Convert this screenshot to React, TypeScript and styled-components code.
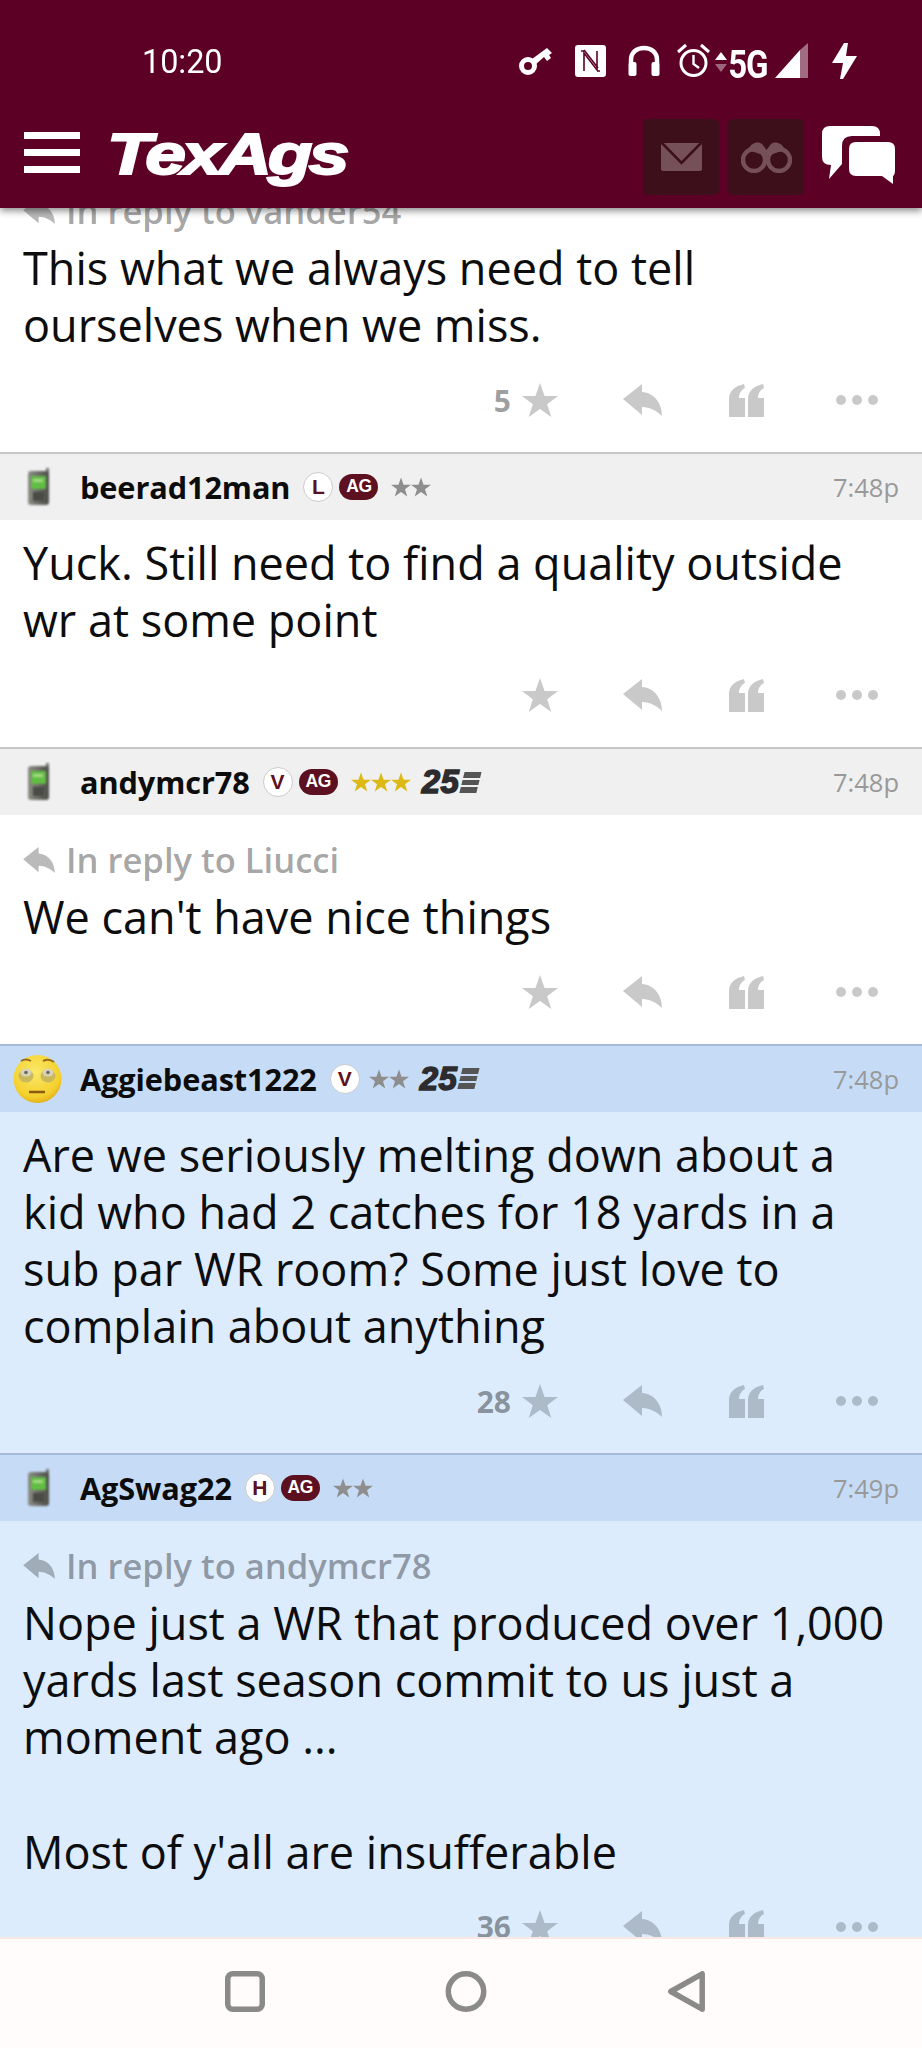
import React from "react";
import styled, { createGlobalStyle } from "styled-components";

const Global = createGlobalStyle`
  html, body { margin: 0; padding: 0; background: #fff; }
  body { width: 922px; height: 2048px; overflow: hidden; font-family: "Open Sans", "Liberation Sans", sans-serif; }
`;

const Page = styled.div`
  width: 922px; height: 2048px; display: flex; flex-direction: column; overflow: hidden;
`;
const Header = styled.header`
  position: relative; z-index: 2; flex: 0 0 208px; background: #5d0025;
  box-shadow: 0 3px 7px rgba(0,0,0,.45); display: flex; flex-direction: column;
`;
const StatusBar = styled.div`
  flex: 0 0 119px; box-sizing: border-box; padding: 2px 65px 0 142px; display: flex; align-items: center; color: #fff;
`;
const Clock = styled.span`
  font: 400 33px Roboto, sans-serif; margin-right: auto; position: relative; top: 1px; display: inline-block; transform: scaleX(.98); transform-origin: left center;
`;
const StatusIcon = styled.svg<{ $ml: number }>`
  margin-left: ${p => p.$ml}px; flex: none; fill: #fff; overflow: visible;
`;
const FiveG = styled.span`
  font: 700 33px Roboto, sans-serif; margin-left: 1px; position: relative; top: 4px; letter-spacing: -1.4px; display: inline-block; transform: scaleY(1.16);
`;
const Toolbar = styled.div`
  flex: 1; display: flex; align-items: flex-start; padding: 0 27px 0 24px;
`;
const Burger = styled.div`
  width: 56px; height: 41px; margin-top: 13px; display: flex; flex-direction: column; justify-content: space-between;
  & > i { display: block; height: 7px; background: #fff; }
`;
const Logo = styled.span`
  margin-left: 27px; margin-top: 2px; color: #fff; font: italic 700 58px/66px "Liberation Sans", sans-serif;
  letter-spacing: -3px; -webkit-text-stroke: 2px #fff; display: inline-block; transform: scaleX(1.26); transform-origin: left center;
`;
const ToolGroup = styled.div`
  margin-left: auto; display: flex; align-items: flex-start;
`;
const DimButton = styled.div`
  width: 76px; height: 76px; margin-right: 9px; border-radius: 5px; background: #3c0f1b;
  display: flex; align-items: center; justify-content: center;
`;
const ChatIcon = styled.svg`
  margin: 7px 0 0 9px; display: block;
`;
const Main = styled.main`
  flex: 1; min-height: 0; overflow: hidden; background: #fff;
`;
const Feed = styled.div`
  margin-top: -42px;
`;
const PostBox = styled.article<{ $blue?: boolean }>`
  background: ${p => (p.$blue ? "#dcecfd" : "#fff")};
  --rule: ${p => (p.$blue ? "#a5bad6" : "#c6c6c6")};
  --head: ${p => (p.$blue ? "#c6dcf6" : "#f0f0f0")};
`;
const PostHead = styled.div`
  height: 66px; border-top: 2px solid var(--rule); background: var(--head);
  display: flex; align-items: center; padding-right: 23px;
`;
const Avatar = styled.div`
  flex: 0 0 80px; display: flex; align-items: center; padding-left: 13px; box-sizing: border-box; height: 100%;
`;
const Name = styled.span`
  font: 700 30.7px "Open Sans", sans-serif; color: #0c0c0c; letter-spacing: -.1px;
`;
const RankBadge = styled.span`
  width: 30px; height: 30px; margin-left: 13px; border-radius: 50%; background: #fff; border: 1px solid #ccc; box-sizing: border-box;
  display: flex; align-items: center; justify-content: center; color: #5d1020; font: 700 21px "Liberation Sans", sans-serif;
`;
const AgBadge = styled.span`
  margin-left: 6px; width: 39px; height: 26px; border-radius: 13px; background: #5d1020; color: #fff;
  display: flex; align-items: center; justify-content: center; font: 700 17.5px "Liberation Sans", sans-serif; letter-spacing: -.4px;
`;
const StarRow = styled.span<{ $after: number }>`
  display: flex; margin-left: ${p => p.$after}px;
`;
const Tier = styled.span`
  margin-left: 11px; display: flex; align-items: center; color: #2c2c2e;
  font: italic 700 33px/30px "Liberation Sans", sans-serif; -webkit-text-stroke: 1.5px #2c2c2e; letter-spacing: .4px;
`;
const TierBars = styled.span`
  display: flex; flex-direction: column; gap: 2px; margin-left: 3px; transform: skewX(-14deg);
  & > i { display: block; width: 17px; height: 5.5px; background: #555; }
`;
const Time = styled.span`
  margin-left: auto; font: 400 25.5px "Open Sans", sans-serif; color: #999;
`;
const Body = styled.div`
  padding: 14px 23px 0;
`;
const Reply = styled.div`
  margin: 9px 0 6px; height: 44px; display: flex; align-items: center; gap: 11px;
  font: 600 34.6px/44px "Open Sans", sans-serif; color: rgba(0,0,0,.37);
`;
const Text = styled.p`
  margin: 0; font: 400 45px/57.2px "Open Sans", sans-serif; color: #0d0d0d; white-space: pre-line;
`;
const Actions = styled.div`
  height: 34px; padding: 30px 44px 34.5px 0; display: flex; align-items: center; justify-content: flex-end;
`;
const Count = styled.span`
  font: 700 30px "Open Sans", sans-serif; color: rgba(0,0,0,.4); margin-right: 11px;
`;
const ActionIcon = styled.svg<{ $ml: number }>`
  margin-left: ${p => p.$ml}px; flex: none; fill: rgba(0,0,0,.21);
`;
const NavBar = styled.nav`
  position: relative; z-index: 2; flex: 0 0 111px; box-sizing: border-box; background: #fffcfb; border-top: 2px solid #f8e9e5;
  display: flex; align-items: flex-start; padding: 32px 0 0 225px;
`;
const NavIcon = styled.svg<{ $ml: number }>`
  margin-left: ${p => p.$ml}px; fill: none; stroke: #8a8a88; stroke-width: 5.5; stroke-linejoin: round;
`;

const starPath = "M18 0 L22.6 13 L36 13 L25.2 21.2 L29.3 34 L18 26 L6.7 34 L10.8 21.2 L0 13 L13.4 13 Z";
const replyPath = "M0 15 L19 0 V8 C32 9 39 20 39 32 C34 27 27 23 19 23 V31 Z";

const SmallStar = ({ gold }: { gold?: boolean }) => (
  <svg width="20" height="20" viewBox="0 0 36 34"><path d={starPath} fill={gold ? "#dcb915" : "#8e8e8e"} /></svg>
);

const ReplyGlyph = ({ w, h }: { w: number; h: number }) => (
  <svg width={w} height={h} viewBox="0 0 39 32" style={{ flex: "none" }}>
    <path d={replyPath} fill="rgba(0,0,0,.27)" />
  </svg>
);

const Phone = () => (
  <svg width="24" height="38" viewBox="0 0 24 38" style={{ marginLeft: 14, filter: "blur(.8px)" }}>
    <defs>
      <linearGradient id="ph" x1="0" x2="1"><stop offset="0" stopColor="#8d8d86" /><stop offset="1" stopColor="#4c4c48" /></linearGradient>
    </defs>
    <rect x="19" y="0" width="3" height="8" fill="#777" />
    <rect x="1" y="3" width="21" height="34" rx="3" fill="url(#ph)" />
    <rect x="4" y="8" width="15" height="13" rx="1" fill="#62bd45" />
    <rect x="6" y="11" width="10" height="3" fill="#a5dc84" />
    <rect x="6" y="24" width="11" height="9" fill="#4a4a46" />
  </svg>
);

const Face = () => (
  <svg width="49" height="48" viewBox="0 0 49 48" style={{ filter: "blur(.5px)" }}>
    <defs>
      <radialGradient id="fc" cx=".45" cy=".35" r=".7"><stop offset="0" stopColor="#fbe96a" /><stop offset=".75" stopColor="#f4d02c" /><stop offset="1" stopColor="#dca61a" /></radialGradient>
    </defs>
    <circle cx="24.5" cy="24" r="24" fill="url(#fc)" />
    <ellipse cx="13" cy="21" rx="7.5" ry="6.5" fill="#c9b85c" />
    <ellipse cx="35" cy="21" rx="7.5" ry="6.5" fill="#c9b85c" />
    <ellipse cx="13" cy="17.5" rx="5.5" ry="4" fill="#d8d3b6" />
    <ellipse cx="35" cy="17.5" rx="5.5" ry="4" fill="#d8d3b6" />
    <circle cx="13" cy="17.5" r="1.8" fill="#6a6a60" />
    <circle cx="35" cy="17.5" r="1.8" fill="#6a6a60" />
    <path d="M8 6 Q13 3 18 6 M30 6 Q36 3 41 7" stroke="#9a6a1c" strokeWidth="2" fill="none" />
    <path d="M16 37 H32" stroke="#8a5a14" strokeWidth="2.5" />
  </svg>
);

const ActionBar = ({ count }: { count?: number }) => (
  <Actions>
    {count !== undefined && <Count>{count}</Count>}
    <ActionIcon $ml={0} width="36" height="34" viewBox="0 0 36 34"><path d={starPath} /></ActionIcon>
    <ActionIcon $ml={65} width="39" height="32" viewBox="0 0 39 32"><path d={replyPath} /></ActionIcon>
    <ActionIcon $ml={67} width="35" height="33" viewBox="0 0 35 33"><path d="M0 33 V15 C0 7 6 2 15 0 L16 4 C12 6 10 10 10 14 H16 V33 Z M19 33 V15 C19 7 25 2 34 0 L35 4 C31 6 29 10 29 14 H35 V33 Z" /></ActionIcon>
    <ActionIcon $ml={72} width="42" height="10" viewBox="0 0 42 10"><circle cx="5" cy="5" r="5" /><circle cx="21" cy="5" r="5" /><circle cx="37" cy="5" r="5" /></ActionIcon>
  </Actions>
);

type PostProps = {
  name?: string; rank?: string; ag?: boolean; stars?: number; gold?: boolean; tier?: boolean;
  time?: string; blue?: boolean; reply?: string; text: string; count?: number; face?: boolean;
};

const Post = ({ name, rank, ag, stars = 2, gold, tier, time, blue, reply, text, count, face }: PostProps) => (
  <PostBox $blue={blue}>
    {name && (
      <PostHead>
        <Avatar>{face ? <Face /> : <Phone />}</Avatar>
        <Name>{name}</Name>
        <RankBadge>{rank}</RankBadge>
        {ag && <AgBadge>AG</AgBadge>}
        <StarRow $after={ag ? 13 : 9}>
          {Array.from({ length: stars }, (_, i) => <SmallStar key={i} gold={gold} />)}
        </StarRow>
        {tier && <Tier>25<TierBars><i /><i /><i /></TierBars></Tier>}
        <Time>{time}</Time>
      </PostHead>
    )}
    <Body>
      {reply && <Reply><ReplyGlyph w={32} h={26} />In reply to {reply}</Reply>}
      <Text>{text}</Text>
    </Body>
    <ActionBar count={count} />
  </PostBox>
);

export default function App() {
  return (
    <Page>
      <Global />
      <Header>
        <StatusBar>
          <Clock>10:20</Clock>
          <StatusIcon $ml={0} width="35" height="28" viewBox="0 0 35 28">
            <circle cx="9" cy="19" r="6.5" fill="none" stroke="#fff" strokeWidth="5" />
            <path d="M13 12 L28 1 L33 6 L30 8 L32 11 L28 14 L25 10 L17 17 Z" />
          </StatusIcon>
          <StatusIcon $ml={21} width="31" height="32" viewBox="0 0 31 32">
            <rect width="31" height="32" rx="3" />
            <path d="M9 26 V8 L22 25 V6 M6 6 H9 M22 26 H25 M9 5 L23 23" fill="none" stroke="#5d0025" strokeWidth="1.6" />
          </StatusIcon>
          <StatusIcon $ml={22} width="32" height="31" viewBox="0 0 32 31">
            <path d="M3 18 V15 C3 7 9 3 16 3 C23 3 29 7 29 15 V18" fill="none" stroke="#fff" strokeWidth="4.5" />
            <rect x="0.5" y="17" width="8" height="14" rx="2" />
            <rect x="23.5" y="17" width="8" height="14" rx="2" />
          </StatusIcon>
          <StatusIcon $ml={17} width="33" height="33" viewBox="0 0 33 33">
            <circle cx="16.5" cy="19" r="12.5" fill="none" stroke="#fff" strokeWidth="3" />
            <path d="M16.5 11 V20 L22 24" fill="none" stroke="#fff" strokeWidth="2.4" />
            <path d="M1 8 L9 1 M32 8 L24 1" fill="none" stroke="#fff" strokeWidth="3" />
          </StatusIcon>
          <StatusIcon $ml={5} width="12" height="20" viewBox="0 0 12 20" style={{ marginTop: 2 }}>
            <path d="M6 0 L12 8 H0 Z" />
            <path d="M0 12 H12 L6 20 Z" fill="rgba(255,255,255,.4)" />
          </StatusIcon>
          <FiveG>5G</FiveG>
          <StatusIcon $ml={8} width="33" height="35" viewBox="0 0 33 35">
            <path d="M33 0 V35 H25 V7 Z" fill="rgba(255,255,255,.42)" />
            <path d="M25 7 V35 H0 Z" />
          </StatusIcon>
          <StatusIcon $ml={24} width="25" height="36" viewBox="0 0 25 36">
            <path d="M12 0 H16 L14 13 H25 L11 36 H8 L11 20 H0 Z" />
          </StatusIcon>
        </StatusBar>
        <Toolbar>
          <Burger><i /><i /><i /></Burger>
          <Logo>TexAgs</Logo>
          <ToolGroup>
            <DimButton>
              <svg width="41" height="28" viewBox="0 0 41 28">
                <rect width="41" height="28" rx="2" fill="#755059" />
                <path d="M1 0 L20.5 20 L40 0" fill="none" stroke="#3c0f1b" strokeWidth="2.6" />
              </svg>
            </DimButton>
            <DimButton>
              <svg width="51" height="31" viewBox="0 0 51 31">
                <circle cx="13" cy="18" r="11" fill="none" stroke="#755059" strokeWidth="4.4" />
                <circle cx="38" cy="18" r="11" fill="none" stroke="#755059" strokeWidth="4.4" />
                <path d="M7 8 C10 0 18 -1 21 2 L25.5 8 L30 2 C33 -1 41 0 44 8 L25.5 14 Z" fill="#755059" />
              </svg>
            </DimButton>
            <ChatIcon width="73" height="58" viewBox="0 0 73 58">
              <path d="M8 0 H50 Q58 0 58 8 V10 H30 Q20 10 20 20 V38 L7 53 L9 39 Q0 39 0 31 V8 Q0 0 8 0 Z" fill="#fff" />
              <path d="M34 16 H66 Q73 16 73 23 V44 Q73 49 71 50 V58 L60 50 H34 Q27 50 27 43 V23 Q27 16 34 16 Z" fill="#fff" />
            </ChatIcon>
          </ToolGroup>
        </Toolbar>
      </Header>
      <Main>
        <Feed>
          <Post reply="vander54" text="This what we always need to tell ourselves when we miss." count={5} />
          <Post name="beerad12man" rank="L" ag time="7:48p" text="Yuck. Still need to find a quality outside wr at some point" />
          <Post name="andymcr78" rank="V" ag stars={3} gold tier time="7:48p" reply="Liucci" text="We can't have nice things" />
          <Post blue face name="Aggiebeast1222" rank="V" tier time="7:48p" count={28}
            text="Are we seriously melting down about a kid who had 2 catches for 18 yards in a sub par WR room? Some just love to complain about anything" />
          <Post blue name="AgSwag22" rank="H" ag time="7:49p" reply="andymcr78" count={36}
            text={"Nope just a WR that produced over 1,000 yards last season commit to us just a moment ago ...\n\nMost of y'all are insufferable"} />
        </Feed>
      </Main>
      <NavBar>
        <NavIcon $ml={0} width="40" height="41" viewBox="0 0 40 41"><rect x="2.75" y="2.75" width="34.5" height="35.5" rx="5" /></NavIcon>
        <NavIcon $ml={180} width="42" height="41" viewBox="0 0 42 41"><circle cx="21" cy="20.5" r="17.7" /></NavIcon>
        <NavIcon $ml={181} width="37" height="41" viewBox="0 0 37 41"><path d="M34.2 2.8 V38.2 L2.8 20.5 Z" /></NavIcon>
      </NavBar>
    </Page>
  );
}
